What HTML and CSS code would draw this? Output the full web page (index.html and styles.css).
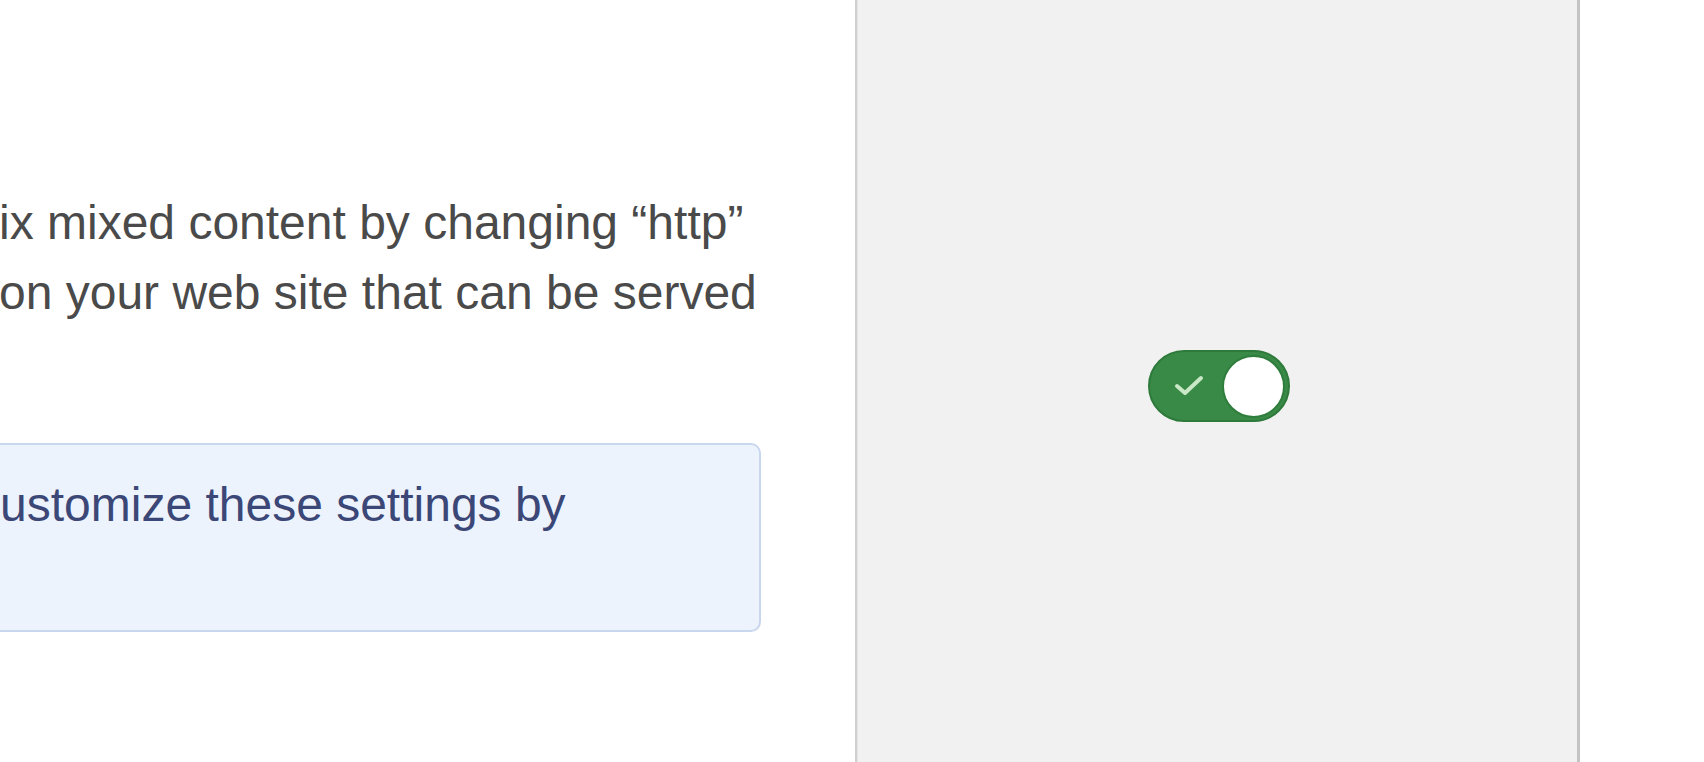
FILE: index.html
```html
<!DOCTYPE html>
<html lang="en">
<head>
<meta charset="utf-8">
<title>Settings</title>
<link rel="stylesheet" href="styles.css">
</head>
<body>
<div class="page">
  <section class="desc">
    <p class="desc-text">ix mixed content by changing “http”<br>on your web site that can be served</p>
    <div class="notice">
      <p class="notice-text">ustomize these settings by</p>
    </div>
  </section>
  <section class="control-panel">
    <div class="toggle" role="switch" aria-checked="true">
      <svg class="toggle-check" width="30" height="22" viewBox="0 0 30 22" aria-hidden="true">
        <path d="M3 12 L11 19 L27 4" fill="none" stroke="#c9e8c6" stroke-width="4" stroke-linecap="round" stroke-linejoin="round"/>
      </svg>
      <span class="toggle-knob"></span>
    </div>
  </section>
  <section class="right-space"></section>
</div>
</body>
</html>
```

FILE: styles.css
```css
html, body {
  margin: 0;
  padding: 0;
  background: #ffffff;
}

.page {
  display: flex;
  width: 1704px;
  height: 762px;
  overflow: hidden;
  font-family: "Liberation Sans", Arial, Helvetica, sans-serif;
}

.desc {
  width: 855px;
  flex: none;
  padding-top: 188px;
  box-sizing: border-box;
  overflow: hidden;
}

.desc-text {
  margin: 0 0 0 -1px;
  font-size: 48px;
  line-height: 70px;
  color: #4a4a4a;
  white-space: nowrap;
}

.notice {
  margin-top: 115px;
  margin-left: -40px;
  width: 801px;
  box-sizing: border-box;
  background: #edf3fd;
  border: 2px solid #c9d7ee;
  border-radius: 10px;
  padding: 25px 0 90px 38px;
}

.notice-text {
  margin: 0;
  font-size: 48px;
  line-height: 70px;
  color: #3b4776;
  white-space: nowrap;
}

.control-panel {
  flex: none;
  width: 725px;
  box-sizing: border-box;
  background: #f1f1f1;
  border-left: 2px solid #d0d0d0;
  border-right: 3px solid #c4c4c4;
  box-shadow: inset 1px 0 0 #e4e4e4;
  display: flex;
  align-items: center;
  justify-content: center;
  padding-top: 10px;
}

.toggle {
  width: 142px;
  height: 72px;
  box-sizing: border-box;
  border-radius: 36px;
  background: #3a8a47;
  border: 2px solid #2e7a3b;
  display: flex;
  align-items: center;
  justify-content: space-between;
  padding: 0 3px 0 24px;
  margin-left: 4px;
}

.toggle-check {
  display: block;
  margin-top: -2px;
}

.toggle-knob {
  width: 63px;
  height: 63px;
  box-sizing: border-box;
  border-radius: 50%;
  background: #ffffff;
  border: 2px solid #2f7d3c;
}

.right-space {
  flex: 1;
  background: #ffffff;
}
```
